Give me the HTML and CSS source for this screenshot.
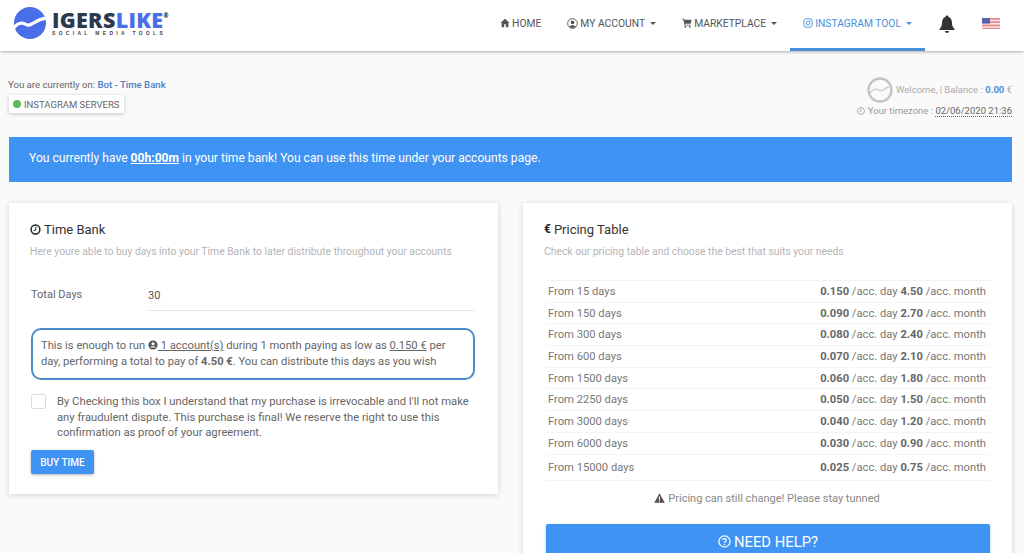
FILE: index.html
```html
<!DOCTYPE html>
<html lang="en">
<head>
<meta charset="utf-8">
<title>IgersLike - Time Bank</title>
<link rel="stylesheet" href="styles.css">
</head>
<body>
<header class="topbar">
  <a class="brand">
    <svg class="brand-mark" viewBox="0 0 32 32" width="32" height="32">
      <circle cx="16" cy="16" r="16" fill="#4a6ee8"/>
      <path d="M-1 22 C3 16 8 15 12 17.500 C17 20.500 21 12 33 11" fill="none" stroke="#fff" stroke-width="3.200"/>
    </svg>
    <span class="brand-text">
      <span class="brand-name">IGERS<span class="brand-accent">LIKE</span><sup class="brand-reg">®</sup></span>
      <span class="brand-tag">SOCIAL MEDIA TOOLS</span>
    </span>
  </a>
  <nav class="nav">
    <a class="nav-item">
      <svg class="nav-ico" viewBox="0 0 12 12" width="10" height="10"><path d="M6 1 L0.5 6 L2 6 L2 11 L5 11 L5 7.500 L7 7.500 L7 11 L10 11 L10 6 L11.500 6 Z" fill="currentColor"/></svg>
      <span>HOME</span>
    </a>
    <a class="nav-item">
      <svg class="nav-ico" viewBox="0 0 12 12" width="11" height="11"><circle cx="6" cy="6" r="5.300" fill="none" stroke="currentColor" stroke-width="1"/><circle cx="6" cy="4.800" r="2" fill="currentColor"/><path d="M2.500 9.600 C3.500 7.400 8.500 7.400 9.500 9.600 C8 11.200 4 11.200 2.500 9.600 Z" fill="currentColor"/></svg>
      <span>MY ACCOUNT</span> <i class="caret"></i>
    </a>
    <a class="nav-item">
      <svg class="nav-ico" viewBox="0 0 12 12" width="10" height="10"><path d="M0.500 1 H2.400 L2.800 2.200 H11.500 L10.400 7 H3.800 L3.900 8 H10.400 V9 H3 L1.700 2 H0.500 Z" fill="currentColor"/><circle cx="4" cy="10.600" r="1.100" fill="currentColor"/><circle cx="9.400" cy="10.600" r="1.100" fill="currentColor"/></svg>
      <span>MARKETPLACE</span> <i class="caret"></i>
    </a>
    <a class="nav-item nav-active">
      <svg class="nav-ico" viewBox="0 0 12 12" width="10" height="10"><rect x="1" y="1" width="10" height="10" rx="2.800" fill="none" stroke="currentColor" stroke-width="1.100"/><circle cx="6" cy="6" r="2.300" fill="none" stroke="currentColor" stroke-width="1.100"/><circle cx="8.800" cy="3.200" r=".6" fill="currentColor"/></svg>
      <span>INSTAGRAM TOOL</span> <i class="caret"></i>
    </a>
    <a class="nav-bell">
      <svg viewBox="0 0 16 18" width="16" height="18"><path d="M8 0.500 C9 0.500 9.500 1.200 9.500 2 C12 2.800 13 5 13 8 C13 11 14 12.500 15.500 14 V15 H0.500 V14 C2 12.500 3 11 3 8 C3 5 4 2.800 6.500 2 C6.500 1.200 7 0.500 8 0.500 Z" fill="#333"/><path d="M6 16 H10 C10 17.200 9 18 8 18 C7 18 6 17.200 6 16 Z" fill="#333"/></svg>
    </a>
    <a class="nav-flag">
      <svg viewBox="0 0 18 11" width="18" height="11"><rect width="18" height="11" fill="#e8878a"/><rect y="1.700" width="18" height="1.600" fill="#f6e6e6"/><rect y="5" width="18" height="1.600" fill="#f6e6e6"/><rect y="8.300" width="18" height="1.600" fill="#f6e6e6"/><rect width="8" height="5.600" fill="#5a60a8"/></svg>
    </a>
  </nav>
</header>

<main class="page">
  <section class="status">
    <div class="status-left">
      <p class="crumb">You are currently on: <a class="crumb-link">Bot - Time Bank</a></p>
      <span class="server-badge"><i class="dot"></i>INSTAGRAM SERVERS</span>
    </div>
    <div class="status-right">
      <div class="welcome">
        <svg class="avatar" viewBox="0 0 26 26" width="26" height="26"><circle cx="13" cy="13" r="11.500" fill="#fafafa" stroke="#c4c4c4" stroke-width="2.400"/><path d="M3 16 C7 11 10 12 13 13.500 C16 15 19 10 23 9" fill="none" stroke="#cfcfcf" stroke-width="1.400"/></svg>
        <span class="welcome-text">Welcome, | Balance : <b class="balance">0.00</b> €</span>
      </div>
      <p class="tz"><svg class="tz-ico" viewBox="0 0 10 10" width="8" height="8"><circle cx="5" cy="5" r="4.300" fill="none" stroke="currentColor" stroke-width="1"/><path d="M5 2.400 V5 L3.400 6" fill="none" stroke="currentColor"/></svg> Your timezone : <span class="tz-val">02/06/2020 21:36</span></p>
    </div>
  </section>

  <p class="banner">You currently have <b class="banner-time">00h:00m</b> in your time bank! You can use this time under your accounts page.</p>

  <div class="cols">
    <section class="card card-left">
      <h2 class="card-title">
        <svg class="title-ico" viewBox="0 0 12 12" width="11" height="11"><circle cx="6" cy="6" r="4.800" fill="none" stroke="#222" stroke-width="1.600"/><path d="M6.300 3 V6.300 L4 7.500" fill="none" stroke="#222" stroke-width="1.100"/></svg>
        Time Bank
      </h2>
      <p class="card-sub">Here youre able to buy days into your Time Bank to later distribute throughout your accounts</p>
      <div class="field">
        <label class="field-label">Total Days</label>
        <div class="field-input">30</div>
      </div>
      <div class="notice">This is enough to run <svg class="notice-ico" viewBox="0 0 12 12" width="10" height="10"><circle cx="6" cy="6" r="5.500" fill="#555"/><circle cx="6" cy="4.500" r="1.900" fill="#fff"/><path d="M2.500 9 C3.500 7 8.500 7 9.500 9 Z" fill="#fff"/></svg><u> 1 account(s)</u> during 1 month paying as low as <u>0.150 €</u> per day, performing a total to pay of <b>4.50 €</b>. You can distribute this days as you wish</div>
      <div class="agree">
        <i class="checkbox"></i>
        <p class="agree-text">By Checking this box I understand that my purchase is irrevocable and I'll not make any fraudulent dispute. This purchase is final! We reserve the right to use this confirmation as proof of your agreement.</p>
      </div>
      <button class="buy">BUY TIME</button>
    </section>

    <section class="card card-right">
      <h2 class="card-title"><b class="euro">€</b> Pricing Table</h2>
      <p class="card-sub">Check our pricing table and choose the best that suits your needs</p>
      <div class="price-table">
        <div class="price-row"><span>From 15 days</span><span><b>0.150</b> /acc. day <b>4.50</b> /acc. month</span></div>
        <div class="price-row"><span>From 150 days</span><span><b>0.090</b> /acc. day <b>2.70</b> /acc. month</span></div>
        <div class="price-row"><span>From 300 days</span><span><b>0.080</b> /acc. day <b>2.40</b> /acc. month</span></div>
        <div class="price-row"><span>From 600 days</span><span><b>0.070</b> /acc. day <b>2.10</b> /acc. month</span></div>
        <div class="price-row"><span>From 1500 days</span><span><b>0.060</b> /acc. day <b>1.80</b> /acc. month</span></div>
        <div class="price-row"><span>From 2250 days</span><span><b>0.050</b> /acc. day <b>1.50</b> /acc. month</span></div>
        <div class="price-row"><span>From 3000 days</span><span><b>0.040</b> /acc. day <b>1.20</b> /acc. month</span></div>
        <div class="price-row"><span>From 6000 days</span><span><b>0.030</b> /acc. day <b>0.90</b> /acc. month</span></div>
        <div class="price-row price-row-last"><span>From 15000 days</span><span><b>0.025</b> /acc. day <b>0.75</b> /acc. month</span></div>
      </div>
      <p class="warn"><svg viewBox="0 0 12 11" width="11" height="10"><path d="M6 0.300 L11.800 10.700 H0.200 Z" fill="#555"/><rect x="5.400" y="3.800" width="1.200" height="3.700" fill="#fff"/><rect x="5.400" y="8.200" width="1.200" height="1.300" fill="#fff"/></svg> Pricing can still change! Please stay tunned</p>
      <button class="help"><svg viewBox="0 0 14 14" width="13" height="13"><circle cx="7" cy="7" r="6" fill="none" stroke="#fff" stroke-width="1.300"/><path d="M5 5.500 C5 3.500 9 3.500 9 5.500 C9 7 7 7 7 8.500" fill="none" stroke="#fff" stroke-width="1.300"/><circle cx="7" cy="10.300" r=".8" fill="#fff"/></svg> NEED HELP?</button>
    </section>
  </div>
</main>
</body>
</html>
```
FILE: styles.css
```css
* { box-sizing: border-box; }
html, body { margin: 0; height: 553px; overflow: hidden; }
body { background: #fafafa; font-family: Roboto, "Liberation Sans", sans-serif; color: #666; font-size: 11px; }
p, h2 { margin: 0; }
b { font-weight: 700; }

.topbar { height: 51px; background: #fff; display: flex; justify-content: space-between; box-shadow: 0 1px 3px rgba(0,0,0,.3); position: relative; }
.brand { display: flex; align-items: center; gap: 6px; padding: 0 0 6px 14px; }
.brand-mark { display: block; }
.brand-text { display: flex; flex-direction: column; }
.brand-name { font-family: "Open Sans", "Liberation Sans", sans-serif; font-size: 21.500px; font-weight: 800; line-height: 21px; letter-spacing: 0.300px; color: #2d3a4d; white-space: nowrap; }
.brand-accent { color: #4a6ee8; }
.brand-reg { font-size: 6px; line-height: 0; vertical-align: 10px; letter-spacing: 0; }
.brand-tag { font-family: "Liberation Sans", sans-serif; font-size: 5px; line-height: 6px; font-weight: 700; letter-spacing: 3.300px; color: #444; white-space: nowrap; }

.nav { display: flex; align-items: stretch; padding-right: 24px; }
.nav-item { display: flex; align-items: center; gap: 2px; font-size: 10.300px; color: #555; padding: 0 13px 2px; height: 51px; white-space: nowrap; border-bottom: 3px solid transparent; }
.nav-ico { display: block; flex: none; }
.caret { display: inline-block; width: 0; height: 0; border: 3.500px solid transparent; border-top-color: currentColor; border-bottom-width: 0; margin-left: 3px; }
.nav-active { color: #4a90d9; border-bottom-color: #4a90d9; }
.nav-bell { display: flex; align-items: center; padding: 0 0 3px 14px; }
.nav-flag { display: flex; align-items: center; padding: 0 0 5px 27px; }

.page { padding: 0 12px 0 9px; }
.status { display: flex; justify-content: space-between; height: 86px; padding-top: 28px; }
.crumb { font-size: 9.600px; line-height: 12px; color: #666; margin-left: -1px; }
.crumb-link { color: #4a80c4; font-weight: 500; }
.server-badge { display: inline-flex; align-items: center; gap: 3px; margin-top: 4px; height: 18px; padding: 0 5px 0 4px; font-size: 9.500px; background: #fff; color: #666; box-shadow: 0 1px 4px rgba(0,0,0,.22); }
.dot { width: 8px; height: 8px; border-radius: 50%; background: #5cb85c; }
.status-right { display: flex; flex-direction: column; align-items: flex-end; font-size: 9.500px; color: #aaa; }
.welcome { display: flex; align-items: center; gap: 3px; margin-top: -2px; }
.welcome-text { padding-bottom: 2px; }
.avatar { display: block; }
.balance { color: #4a90d9; }
.tz { margin-top: 2px; line-height: 12px; white-space: nowrap; color: #999; }
.tz-ico { vertical-align: -1px; }
.tz-val { color: #666; border-bottom: 1px dotted #666; }

.banner { height: 45px; line-height: 43px; padding-left: 20px; background: #3f93f2; color: #fff; font-size: 12.100px; white-space: nowrap; }
.banner-time { text-decoration: underline; font-weight: 700; }

.cols { display: flex; gap: 25px; margin-top: 21px; align-items: flex-start; }
.card { background: #fff; box-shadow: 0 1px 6px rgba(0,0,0,.16); padding: 19px 22px 0 21px; }
.card-left { width: 489px; height: 291px; }
.card-right { width: 489px; height: 400px; }
.card-title { display: flex; align-items: center; gap: 3px; font-size: 13px; line-height: 15px; font-weight: 400; color: #333; }
.title-ico { display: block; }
.euro { font-size: 12px; color: #222; }
.card-sub { margin-top: 9px; font-size: 10.350px; line-height: 12px; color: #b5b5b5; white-space: nowrap; }

.field { display: flex; margin-top: 30px; }
.field-label { width: 118px; padding-left: 1px; font-size: 11px; line-height: 13px; color: #666; }
.field-input { flex: 1; height: 23px; margin-right: 1px; padding-top: 1px; font-size: 11px; line-height: 14px; color: #555; border-bottom: 1px solid #e8e8e8; }

.notice { margin-top: 17px; margin-left: 1px; width: 444px; height: 52px; padding: 8px 18px 8px 8px; border: 2px solid #4a8cc8; border-radius: 10px; font-size: 11.200px; line-height: 15.500px; color: #666; }
.notice-ico { vertical-align: -1px; }

.agree { display: flex; gap: 11px; margin-top: 14px; }
.checkbox { flex: none; width: 15px; height: 15px; margin-left: 1px; background: #fff; border: 1px solid #ddd; border-radius: 2px; }
.agree-text { font-size: 11.250px; line-height: 15.700px; color: #666; }

.buy { display: block; margin-top: 9px; margin-left: 1px; width: 63px; height: 24px; padding: 0; border: 0; border-radius: 2px; background: #3f93f2; color: #fff; font: 500 10px Roboto, sans-serif; box-shadow: 0 1px 3px rgba(0,0,0,.3); }

.price-table { margin-top: 22px; margin-left: 2px; border-top: 1px solid #f1f1f1; }
.price-row { display: flex; justify-content: space-between; height: 21.700px; align-items: center; padding: 0 4px 0 2px; font-size: 11.200px; color: #777; border-bottom: 1px solid #f4f4f4; }
.price-row b { color: #666; }
.price-row-last { height: 26px; }
.warn { display: flex; align-items: center; justify-content: center; gap: 3px; margin-top: 11px; font-size: 11px; line-height: 13px; color: #888; }

.help { display: flex; align-items: center; justify-content: center; gap: 3px; margin-top: 19px; margin-left: 2px; width: 444px; height: 36px; border: 0; border-radius: 2px; background: #3f93f2; color: #fff; font: 400 14.800px Roboto, sans-serif; box-shadow: 0 1px 3px rgba(0,0,0,.25); }
```
